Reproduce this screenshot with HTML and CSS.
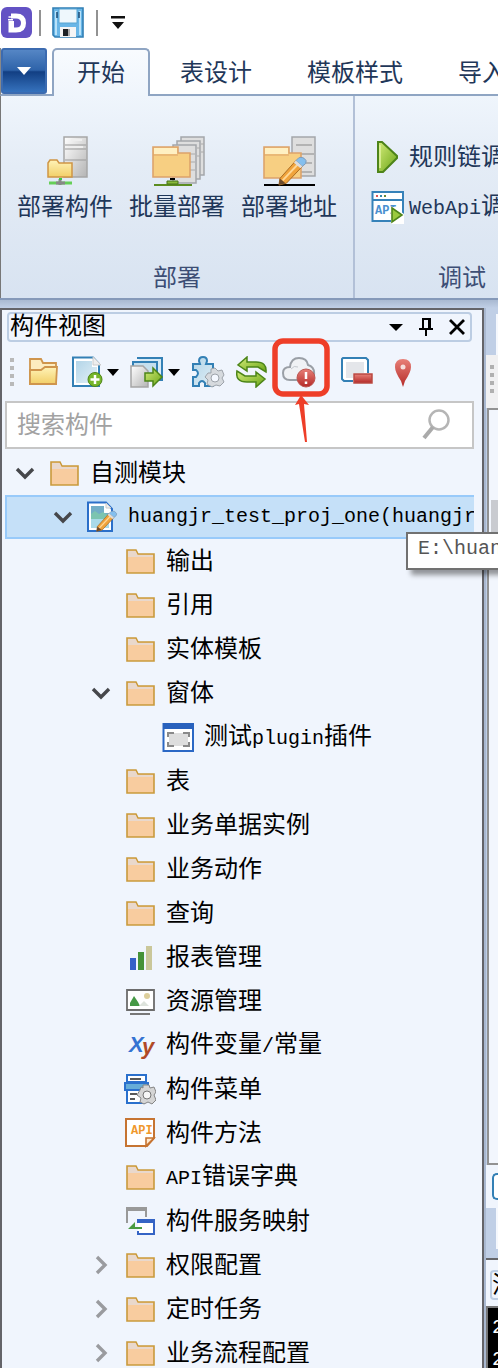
FILE: index.html
```html
<!DOCTYPE html>
<html lang="zh-CN">
<head>
<meta charset="utf-8">
<meta name="viewport" content="width=device-width">
<title>构件视图</title>
<link rel="stylesheet" href="styles.css">
</head>
<body>
<svg class="defs" aria-hidden="true">
  <defs>
    <linearGradient id="gray" x1="0" y1="0" x2="1" y2="1"><stop offset="0" stop-color="#fff"/><stop offset="1" stop-color="#b4b4b4"/></linearGradient>
    <linearGradient id="yellow" x1="0" y1="0" x2="0" y2="1"><stop offset="0" stop-color="#fff3b8"/><stop offset="1" stop-color="#f2cf68"/></linearGradient>
    <linearGradient id="green" x1="0" y1="0" x2="1" y2="1"><stop offset="0" stop-color="#d4ec7a"/><stop offset="1" stop-color="#6aa516"/></linearGradient>
    <linearGradient id="red" x1="0" y1="0" x2="0" y2="1"><stop offset="0" stop-color="#e88078"/><stop offset="1" stop-color="#b42a28"/></linearGradient>
    <linearGradient id="sky" x1="0" y1="0" x2="1" y2="1"><stop offset="0" stop-color="#b3d5e8"/><stop offset="1" stop-color="#e3f0f6"/></linearGradient>
    <symbol id="folder" viewBox="0 0 32 32"><path d="M3 5H12L14 9H30V28H3Z" fill="#f8cc9f" stroke="#c99a3c" stroke-width="1.6"/><path d="M4 6H11.500L13.500 10H29V12H4Z" fill="#e9d8cc"/></symbol>
    <symbol id="chevron" viewBox="0 0 20 20"><path d="M2 6L10 14L18 6" fill="none" stroke="currentColor" stroke-width="3.400"/></symbol>
    <symbol id="pencil" viewBox="0 0 32 32"><path d="M2 24L19 5L26 11L9 29L1 31Z" fill="#f0a33b" stroke="#a8681e"/><path d="M5 26L22 8" stroke="#ffd795" stroke-width="2"/><path d="M19 5L22 2Q27 0 30 5Q31 8 26 11Z" fill="#84bfee" stroke="#7e99b5"/><path d="M18 6L25 12" stroke="#ddd" stroke-width="3"/><path d="M2 24L8 29L1 31Z" fill="#6b4a2c"/></symbol>
  </defs>
</svg>
<div class="window">
  <header class="titlebar">
    <svg class="logo" viewBox="0 0 32 32" role="img" aria-label="D"><rect width="31" height="31" rx="6" fill="#6352c4"/><path d="M10 6.500H15Q25 6.500 25 16T15 25.500H7.500V14H13V20.500H15Q20 20.500 20 16T15 11.500H10Z" fill="#fff"/><path d="M7.500 10H14M7 12.700H12" stroke="#fff" stroke-width="1.500"/></svg>
    <span class="sep"></span>
    <button class="plain save" aria-label="保存"><svg width="32" height="32" viewBox="0 0 32 32"><path d="M1 1H31V30H3L1 28Z" fill="#69b6e7" stroke="#317fb5" stroke-width="1.600"/><path d="M4 4V28M28 4V28" stroke="#b8e2fa" stroke-width="2"/><path d="M7 2H25V16H7Z" fill="#eef7fc" stroke="#59a4d2"/><path d="M5 5V11M27 5V11" stroke="#174a75" stroke-width="1.500"/><path d="M8 20H24V30H8Z" fill="#f5f5f5"/><path d="M11 22H16V29H11Z" fill="#1e2226"/><path d="M16 22H18V29H16Z" fill="#aaa"/></svg></button>
    <span class="sep"></span>
    <button class="plain" aria-label="自定义"><svg width="16" height="16" viewBox="0 0 16 16"><path d="M1 1H15V3.500H1ZM2 7H14L8 14Z" fill="#111"/></svg></button>
  </header>
  <nav class="tabs">
    <button class="app-button" aria-label="菜单"><svg width="16" height="10" viewBox="0 0 16 10"><path d="M1 1H15L8 9Z" fill="#fff"/></svg></button>
    <button class="tab active">开始</button>
    <button class="tab">表设计</button>
    <button class="tab">模板样式</button>
    <button class="tab">导入导出</button>
  </nav>
  <section class="ribbon">
    <div class="group">
      <div class="big-buttons">
        <button class="big"><svg width="56" height="54" viewBox="0 0 56 54"><path d="M27 3H50V43H27Z" fill="url(#gray)" stroke="#a6a6a6" stroke-width="1.500"/><path d="M28 11H49M28 15H49M28 26H49" stroke="#999"/><path d="M34 6H45M31 13H46" stroke="#eee" stroke-width="2"/><path d="M11 29L13 26H20L22 29H35V43H11Z" fill="url(#yellow)" stroke="#cf9544" stroke-width="1.500"/><path d="M12 49H35" stroke="#65cf57" stroke-width="3"/><path d="M23 45V51M19 49H28" stroke="#888" stroke-width="3"/><path d="M22 45H25" stroke="#39c943" stroke-width="2"/></svg>部署构件</button>
        <button class="big"><svg width="56" height="54" viewBox="0 0 56 54"><g fill="#dedede" stroke="#a4a6aa" stroke-width="1.500"><path d="M32 3H55V41H32Z"/><path d="M28 7H51V45H28Z"/><path d="M24 11H47V49H24Z"/></g><path d="M40 20H46M41 28H46M41 36H46M48 14H51M48 22H51M52 10H55M52 18H55" stroke="#aaa"/><path d="M4 13H29V19H41V43H4Z" fill="#f7cf82" stroke="#dda36b" stroke-width="1.600"/><path d="M5 14H28V20H5Z" fill="#fff0c2"/><path d="M4 21H29" stroke="#dda36b"/><path d="M5 51H43" stroke="#5c8d20" stroke-width="2"/><path d="M18 47H29V50H18Z" fill="#89b93b" stroke="#46731a"/><path d="M21 44H26V46H21Z"/></svg>批量部署</button>
        <button class="big"><svg width="56" height="54" viewBox="0 0 56 54"><path d="M31 3H54V42H31Z" fill="#dedede" stroke="#a4a6aa" stroke-width="1.500"/><path d="M35 11H51M32 20H53M40 29H51M40 38H51" stroke="#a5a5a5" stroke-width="1.500"/><path d="M3 13H28V19H40V44H3Z" fill="#f7cf82" stroke="#dda36b" stroke-width="1.600"/><path d="M4 14H27V20H4Z" fill="#fff0c2"/><path d="M3 21H28" stroke="#dda36b"/><path d="M3 51H54" stroke="#000" stroke-width="2"/><use href="#pencil" x="17" y="22" width="30" height="30"/></svg>部署地址</button>
      </div>
      <div class="group-title">部署</div>
    </div>
    <div class="group debug">
      <div class="small-buttons">
        <button class="small"><svg width="34" height="34" viewBox="0 0 34 34"><path d="M7 2H11L26 16V18L12 32H7Z" fill="url(#green)" stroke="#4e8419" stroke-width="2"/><path d="M9 5V28" stroke="#e2f5a2" stroke-width="1.500"/></svg>规则链调试</button>
        <button class="small"><svg width="34" height="34" viewBox="0 0 34 34"><path d="M1.500 2H32V31H1.500Z" fill="#fff" stroke="#3682b9" stroke-width="2"/><path d="M2 10H32" stroke="#3682b9" stroke-width="2"/><path d="M5 5H7V7H5Z" fill="#d55"/><path d="M9 5H11V7H9Z" fill="#38a"/><path d="M13 5H15V7H13Z" fill="#683"/><text x="4" y="24" class="api-blue">API</text><path d="M20 34V17H24L33 24V34Z" fill="#fff"/><path d="M21 18L31 25L21 32Z" fill="#9bc93e" stroke="#4e8419" stroke-width="1.600"/></svg><span><span class="lat">WebApi</span>调试</span></button>
      </div>
      <div class="group-title">调试</div>
    </div>
  </section>
  <main class="workspace">
    <section class="dock">
      <header class="dock-title"><h1>构件视图</h1>
        <div class="dock-actions">
        <button class="plain" aria-label="选项"><svg width="16" height="20" viewBox="0 0 16 20"><path d="M1 7H15L8 14Z"/></svg></button>
        <button class="plain" aria-label="固定"><svg width="16" height="20" viewBox="0 0 16 20"><path d="M4 2H12V11M5 1V12M1 12H15M8 12V19" fill="none" stroke="#000" stroke-width="2"/><path d="M10 2H13V12H10Z"/></svg></button>
        <button class="plain" aria-label="关闭"><svg width="18" height="20" viewBox="0 0 18 20"><path d="M2 3L16 17M16 3L2 17" stroke="#000" stroke-width="2.800"/></svg></button>
        </div>
      </header>
      <div class="toolbar">
        <svg width="6" height="32" viewBox="0 0 6 32"><path d="M1 2H5V6H1ZM1 10H5V14H1ZM1 18H5V22H1ZM1 26H5V30H1Z" fill="#b9b9b9"/></svg>
        <button class="plain t-open" aria-label="打开"><svg width="32" height="32" viewBox="0 0 32 32"><path d="M3 3H14L16 7H29V28H3Z" fill="#fdecc0" stroke="#cf954d" stroke-width="1.800"/><path d="M3 28V14H14L18 11H30L29 28Z" fill="url(#yellow)" stroke="#cf954d" stroke-width="1.800"/></svg></button>
        <button class="plain t-new" aria-label="新建"><svg width="32" height="32" viewBox="0 0 32 32"><path d="M2 1.500H22L28 8V30H2Z" fill="#fff" stroke="#3380b5" stroke-width="2"/><path d="M5 5H21V11H26V27H5Z" fill="url(#sky)"/><path d="M22 1L30 9H22Z" fill="#eee" stroke="#ccc"/><circle cx="24" cy="23.500" r="7" fill="#76b62a" stroke="#4f8519"/><path d="M24 19V28M19.500 23.500H28.500" stroke="#fff" stroke-width="2.500"/></svg><svg class="caret" width="12" height="8" viewBox="0 0 12 8"><path d="M0 1H12L6 8Z"/></svg></button>
        <button class="plain t-export" aria-label="导出"><svg width="34" height="32" viewBox="0 0 34 32"><path d="M7 2H32V24H12V6" fill="#d9ebf6" stroke="#3380b5" stroke-width="2"/><path d="M3 15V6H27V24" fill="#c5dfee" stroke="#3380b5" stroke-width="2"/><path d="M1 10H13L18 15V31H1Z" fill="url(#gray)" stroke="#a5a5a5" stroke-width="1.500"/><path d="M15 17H23V12L32 21L23 30V25H15Z" fill="url(#green)" stroke="#4c8518" stroke-width="1.500"/></svg><svg class="caret" width="12" height="8" viewBox="0 0 12 8"><path d="M0 1H12L6 8Z"/></svg></button>
        <button class="plain t-plugin" aria-label="插件"><svg width="34" height="32" viewBox="0 0 34 32"><path d="M2 8H9L8 5Q8 1 12 1T16 5L15 8H22V15Q29 15 25 21H22V30H14V27Q11 23 8 27V30H2V21H5Q9 17 5 14H2Z" fill="url(#sky)" stroke="#3380b5" stroke-width="2"/><path d="M20 13L24 12L27 15L31 14L33 19L31 22L33 26L29 30L25 29L21 31L16 28L17 24L14 21L17 17L20 17Z" fill="#d6dade" stroke="#9da3aa"/><circle cx="24" cy="22" r="4" fill="#f4f8ff" stroke="#9da3aa"/></svg></button>
        <button class="plain t-refresh" aria-label="刷新"><svg width="32" height="32" viewBox="0 0 32 32"><path d="M11 1L2 9L11 15V11H22L30 16Q31 6 20 6H11Z" fill="url(#green)" stroke="#4c8518" stroke-width="1.500"/><path d="M20 16V20H9L1 15Q-1 26 11 26H20V31L29 23Z" fill="url(#green)" stroke="#4c8518" stroke-width="1.500"/></svg></button>
        <button class="plain t-cloud marked" aria-label="云端差异"><svg width="34" height="32" viewBox="0 0 34 32"><path d="M8 24Q1 24 1 17Q1 11 8 11Q9 2 17 2Q25 2 26 9Q33 11 32 19Q30 24 25 24Z" fill="#f0f2f5" stroke="#9a9fa6" stroke-width="2"/><path d="M9 13Q12 9 16 11" stroke="#c4c8ce" fill="none"/><circle cx="24" cy="22" r="9" fill="url(#red)" stroke="#bc5650"/><path d="M24 16V23M24 25.500V28" stroke="#fff" stroke-width="2.500"/></svg>
          <svg class="marker" width="58" height="106" viewBox="0 0 58 106" aria-hidden="true"><rect x="3" y="3" width="52" height="53" rx="8" fill="none" stroke="#ee3e28" stroke-width="5.500"/><path d="M29 57L37 67L32 66L35 104H33L27 66L23 67Z" fill="#ee3e28"/></svg></button>
        <button class="plain t-remove" aria-label="移除"><svg width="34" height="32" viewBox="0 0 34 32"><path d="M3 2H26L28 4V25H4L2 23V3Z" fill="#fff" stroke="#3380b5" stroke-width="2"/><path d="M6 6H24V22H6Z" fill="#e4e6ea"/><path d="M13 17H33V28H13Z" fill="#fff"/><path d="M14 18H32V27H14Z" fill="url(#red)" stroke="#b84842" stroke-width="1.500"/></svg></button>
        <button class="plain t-pin" aria-label="定位"><svg width="20" height="32" viewBox="0 0 20 32"><path d="M10 31L8 25Q2 16 2 11Q2 3 10 3T18 11Q18 16 12 25Z" fill="url(#red)"/><circle cx="10" cy="11" r="2.500" fill="#f5dedc"/></svg></button>
      </div>
      <label class="search"><input type="text" placeholder="搜索构件" aria-label="搜索构件"><svg width="32" height="34" viewBox="0 0 32 34"><circle cx="19" cy="12" r="9.500" fill="none" stroke="#b5b5b5" stroke-width="2.500"/><path d="M13 19L4 30" stroke="#aaa" stroke-width="4"/></svg></label>
      <ul class="tree">
        <li class="row l1"><button class="plain twist" aria-label="折叠"><svg><use href="#chevron"/></svg></button><svg class="icon"><use href="#folder"/></svg><span>自测模块</span></li>
        <li class="row l2 selected"><button class="plain twist" aria-label="折叠"><svg><use href="#chevron"/></svg></button><svg class="icon" viewBox="0 0 32 32"><path d="M2 1.500H20L26 8V30H2Z" fill="#fff" stroke="#2b6fc9" stroke-width="2"/><path d="M5 5H18V12H23V27H5Z" fill="#72adc7"/><path d="M5 13L9 10L13 13L17 11L23 15V27H5Z" fill="#7cc4b0"/><path d="M5 18H23V27H5Z" fill="#a9dae9"/><path d="M20 2L25 7H20Z" fill="#eee" stroke="#ccc"/><use href="#pencil" x="10" y="9" width="22" height="22"/></svg><span class="lat">huangjr_test_proj_one(huangjr)</span></li>
        <li class="row l3"><svg class="icon"><use href="#folder"/></svg><span>输出</span></li>
        <li class="row l3"><svg class="icon"><use href="#folder"/></svg><span>引用</span></li>
        <li class="row l3"><svg class="icon"><use href="#folder"/></svg><span>实体模板</span></li>
        <li class="row l3"><button class="plain twist" aria-label="折叠"><svg><use href="#chevron"/></svg></button><svg class="icon"><use href="#folder"/></svg><span>窗体</span></li>
        <li class="row l4"><svg class="icon" viewBox="0 0 32 32"><path d="M1.500 3H31V30H1.500Z" fill="#fff" stroke="#2b68c5" stroke-width="2"/><path d="M1 2H32V8H1Z" fill="#2861bd"/><path d="M7 12H26V25H7Z" fill="#dedede"/><path d="M6 16V12H12M21 12H27V16M27 21V25H21M12 25H6V21" fill="none" stroke="#8a8a8a" stroke-width="2"/></svg><span>测试<span class="lat">plugin</span>插件</span></li>
        <li class="row l3"><svg class="icon"><use href="#folder"/></svg><span>表</span></li>
        <li class="row l3"><svg class="icon"><use href="#folder"/></svg><span>业务单据实例</span></li>
        <li class="row l3"><svg class="icon"><use href="#folder"/></svg><span>业务动作</span></li>
        <li class="row l3"><svg class="icon"><use href="#folder"/></svg><span>查询</span></li>
        <li class="row l3"><svg class="icon" viewBox="0 0 32 32"><path d="M6 17H12V29H6Z" fill="#3560c8"/><path d="M14 11H20V29H14Z" fill="#459238"/><path d="M22 5H28V29H22Z" fill="#cac79a"/></svg><span>报表管理</span></li>
        <li class="row l3"><svg class="icon" viewBox="0 0 32 32"><path d="M3 5H30V25H3Z" fill="#fff" stroke="#6c6c6c" stroke-width="1.800"/><path d="M6 21V18L10 11L14 17L16 21Z" fill="#459845"/><path d="M15 21L20 16L25 21Z" fill="#dde3dc"/><circle cx="23" cy="11" r="3" fill="#ddcf9c"/><path d="M6 29H26" stroke="#777" stroke-width="2"/></svg><span>资源管理</span></li>
        <li class="row l3"><svg class="icon" viewBox="0 0 32 32"><text x="5" y="23" class="var-x">X</text><text x="18" y="25" class="var-y">y</text></svg><span>构件变量<span class="lat">/</span>常量</span></li>
        <li class="row l3"><svg class="icon" viewBox="0 0 32 32"><path d="M3 2H22V9H3Z" fill="#fff" stroke="#2a70cd" stroke-width="2"/><path d="M3 17H20V30H3Z" fill="#fff" stroke="#2a70cd" stroke-width="2"/><path d="M1 10H24V17H1Z" fill="#66add8" stroke="#2a70cd" stroke-width="2"/><path d="M6 6H17M6 21H13M6 26H11" stroke="#222" stroke-width="1.600"/><path d="M19 12H25L26 15L30 14L32 19L30 22L32 27L28 31L24 29L20 31L16 29L17 25L13 22L16 17L17 14L19 15Z" fill="#d5d5d5" stroke="#858585"/><circle cx="23" cy="22" r="4" fill="#f7f7f7" stroke="#777"/></svg><span>构件菜单</span></li>
        <li class="row l3"><svg class="icon" viewBox="0 0 32 32"><path d="M2 2H30V21L23 29H2Z" fill="#fff" stroke="#c67432" stroke-width="2"/><path d="M22 29V21H30Z" fill="#ffe8cf" stroke="#c67432" stroke-width="1.600"/><text x="7" y="17" class="api-orange">API</text></svg><span>构件方法</span></li>
        <li class="row l3"><svg class="icon"><use href="#folder"/></svg><span><span class="lat">API</span>错误字典</span></li>
        <li class="row l3"><svg class="icon" viewBox="0 0 32 32"><path d="M3 18V3H22V12" fill="none" stroke="#999" stroke-width="2"/><path d="M2 3H23V6H2Z" fill="#999"/><path d="M14 15H30V29H14V26" fill="#fff" stroke="#3564c5" stroke-width="2"/><path d="M13 14H31V18H13Z" fill="#3564c5"/><path d="M4 24L11 17V22H18V24Z" fill="#489a3f"/></svg><span>构件服务映射</span></li>
        <li class="row l3 closed"><button class="plain twist" aria-label="展开"><svg><use href="#chevron"/></svg></button><svg class="icon"><use href="#folder"/></svg><span>权限配置</span></li>
        <li class="row l3 closed"><button class="plain twist" aria-label="展开"><svg><use href="#chevron"/></svg></button><svg class="icon"><use href="#folder"/></svg><span>定时任务</span></li>
        <li class="row l3 closed"><button class="plain twist" aria-label="展开"><svg><use href="#chevron"/></svg></button><svg class="icon"><use href="#folder"/></svg><span>业务流程配置</span></li>
      </ul>
    </section>
    <aside class="side">
      <div class="side-tabs"><span></span></div>
      <div class="side-tools"><svg width="6" height="32" viewBox="0 0 6 32"><path d="M1 2H5V6H1ZM1 10H5V14H1ZM1 18H5V22H1ZM1 26H5V30H1Z" fill="#b0b0b0"/></svg></div>
      <div class="side-view"><span class="thumb"></span></div>
      <div class="side-status"><span></span></div>
      <div class="side-tabs low"><span></span></div>
      <div class="side-title"><span>消息</span></div>
      <div class="console"><span class="lat">2</span><span class="lat">2</span></div>
    </aside>
    <div class="tooltip lat" role="tooltip">E:\huangjr</div>
  </main>
</div>
</body>
</html>
```
FILE: styles.css
```css
* { box-sizing: border-box; }
body {
  margin: 0;
  overflow: hidden;
  font: 24px/28px "Liberation Sans", "Noto Sans CJK SC", sans-serif;
  color: #000;
  background: #fff;
}
button, input { font: inherit; color: inherit; }
button { border: 0; padding: 0; background: none; white-space: nowrap; }
svg { display: block; flex: none; }
.defs { position: absolute; width: 0; height: 0; }
.lat { font-family: "Liberation Mono", monospace; font-size: 20px; }
.plain { display: flex; align-items: center; justify-content: center; flex: none; }
.api-blue { font: bold 12px "Liberation Mono", monospace; fill: #4a90d0; }
.api-orange { font: bold 12px "Liberation Mono", monospace; fill: #f0982c; }
.var-x { font: italic bold 22px "Liberation Sans", sans-serif; fill: #3472d2; }
.var-y { font: italic bold 22px "Liberation Sans", sans-serif; fill: #b04a26; }

.window { display: flex; flex-direction: column; height: 100vh; overflow: hidden; }
.titlebar { display: flex; flex: none; align-items: center; height: 48px; padding: 0 0 3px 1px; }
.logo { width: 32px; height: 32px; }
.sep { width: 2px; height: 26px; margin: 0 12px 0 6px; background: #929292; }
.save { margin-left: -1px; }
.save + .sep { margin: 0 12px; }

.tabs { display: flex; flex: none; gap: 5px; height: 48px; border-bottom: 2px solid #8fa5c3; border-left: 1px solid #888; }
.app-button {
  display: grid;
  place-items: center;
  flex: none;
  width: 46px;
  border: 2px solid #3c6bb0;
  border-radius: 3px;
  background: linear-gradient(#5586c5, #2e63a9 48%, #123f83 52%, #3672bd);
}
.tab { flex: none; padding: 3px 23px 0; color: #1f3759; border: 2px solid transparent; }
.tab.active {
  margin-bottom: -2px;
  padding-top: 0;
  border-color: #8fa5c3;
  border-bottom: 0;
  border-radius: 5px 5px 0 0;
  background: linear-gradient(#f8fbfe, #eff5fc);
}

.ribbon {
  display: flex;
  flex: none;
  height: 202px;
  overflow: hidden;
  color: #1f3759;
  border-left: 1px solid #777;
  background: linear-gradient(#eff5fc, #e4ecf6 35%, #d8e3f1);
}
.group { display: flex; flex: none; flex-direction: column; justify-content: space-between; padding: 38px 16px 6px; border-right: 2px solid #b2c0d7; }
.debug { min-width: 216px; }
.big-buttons { display: flex; gap: 16px; }
.big { display: flex; flex-direction: column; align-items: center; gap: 5px; }
.small-buttons { display: flex; flex-direction: column; gap: 16px; align-items: flex-start; padding: 5px 0; }
.small { display: flex; align-items: center; gap: 4px; height: 34px; padding-top: 2px; }
.group-title { text-align: center; color: #3d4e75; }

.workspace {
  position: relative;
  display: grid;
  grid-template-columns: minmax(0, 1fr) 14px;
  flex: 1;
  min-height: 0;
  padding-top: 8px;
  border-top: 2px solid #8599b9;
  background: linear-gradient(#a9b9d1, #c0cfe6 8px);
}
.dock { display: flex; flex-direction: column; min-width: 0; min-height: 0; padding: 2px 8px 0 3px; border: 2px solid #646469; border-bottom: 0; background: #f0f5fd; }
.dock-title { display: flex; flex: none; align-items: center; justify-content: space-between; height: 30px; margin: 0 2px 0 2px; padding: 0 4px 0 1px; border: 2px solid #bccde3; border-radius: 4px; }
.dock-title h1 { margin: 0; padding-bottom: 3px; font-size: 24px; font-weight: 400; line-height: 23px; }
.dock-actions { display: flex; gap: 14px; }
.toolbar { display: flex; flex: none; align-items: center; height: 59px; padding: 0 0 0 4px; }
.t-open, .t-new { margin-left: 12px; }
.caret { margin-left: 4px; }
.t-export, .t-plugin, .t-refresh { margin-left: 11px; }
.t-cloud { margin-left: 14px; }
.t-remove { margin-left: 24px; }
.t-pin { margin-left: 19px; }
.marked { position: relative; }
.marker { position: absolute; left: -10px; top: -18px; z-index: 2; }
.search { display: flex; flex: none; align-items: center; height: 48px; padding: 0 20px 0 10px; border: 2px solid #c6c6c6; background: #fff; }
.search input { flex: 1; min-width: 0; padding: 0; border: 0; outline: 0; background: none; }
.search input::placeholder { color: #a2a2a2; opacity: 1; }

.tree { flex: 1; min-height: 0; margin: 0; padding: 2px 0 0; overflow: hidden; list-style: none; }
.row { display: flex; align-items: center; height: 44px; overflow: hidden; white-space: nowrap; }
.row > span { margin-left: 10px; }
.icon { width: 32px; height: 32px; }
.twist { width: 26px; height: 32px; margin-left: -36px; margin-right: 10px; color: #46474b; }
.twist svg { width: 20px; height: 20px; }
.l1 { padding-left: 43px; }
.l2 { padding-left: 81px; }
.l3 { padding-left: 119px; }
.l4 { padding-left: 157px; }
.selected { background: #c5e0f8; box-shadow: inset 0 2px #98cafa, inset 2px 0 #98cafa, inset 0 -2px #98cafa; }
.closed .twist { color: #9a9b9f; transform: rotate(-90deg); }

.side { display: flex; flex-direction: column; min-height: 0; overflow: hidden; border-left: 2px solid #a9b8d0; }
.side-tabs { flex: none; height: 47px; padding: 6px 0 0 10px; background: #c0cfe6; }
.side-tabs span { display: block; height: 41px; background: #f5f8fd; }
.side-tools { flex: none; height: 53px; padding: 8px 0 0 3px; background: #f0f0f1; }
.side-view { flex: 1; min-height: 0; margin-left: 1px; padding: 90px 0 0 2px; border: 2px solid #929292; border-right: 0; background: #f2f6fd; }
.thumb { display: block; height: 60px; background: #c9cbd0; }
.side-status { flex: none; height: 43px; padding: 8px 0 8px 6px; background: #f0f5fd; }
.side-status span { display: block; height: 27px; border: 2px solid #3380b5; border-right: 0; border-radius: 5px 0 0 5px; background: #fff; }
.side-tabs.low { height: 52px; padding: 0 0 12px 10px; border-bottom: 2px solid #65666a; }
.side-title { flex: none; height: 46px; padding: 10px 0 6px 4px; overflow: hidden; background: #f0f5fd; }
.side-title span { display: block; width: 60px; height: 30px; border: 2px solid #bccde3; border-radius: 4px; line-height: 26px; }
.console { display: flex; flex: none; flex-direction: column; gap: 4px; height: 62px; padding: 6px 0 0 4px; border: 2px solid #777; border-right: 0; border-bottom: 0; color: #fff; background: #000; }

.tooltip { position: absolute; left: 406px; top: 232px; padding: 1px 10px 5px; border: 2px solid #717171; color: #555; background: #fff; box-shadow: 5px 5px 5px #0006; white-space: nowrap; }
```
